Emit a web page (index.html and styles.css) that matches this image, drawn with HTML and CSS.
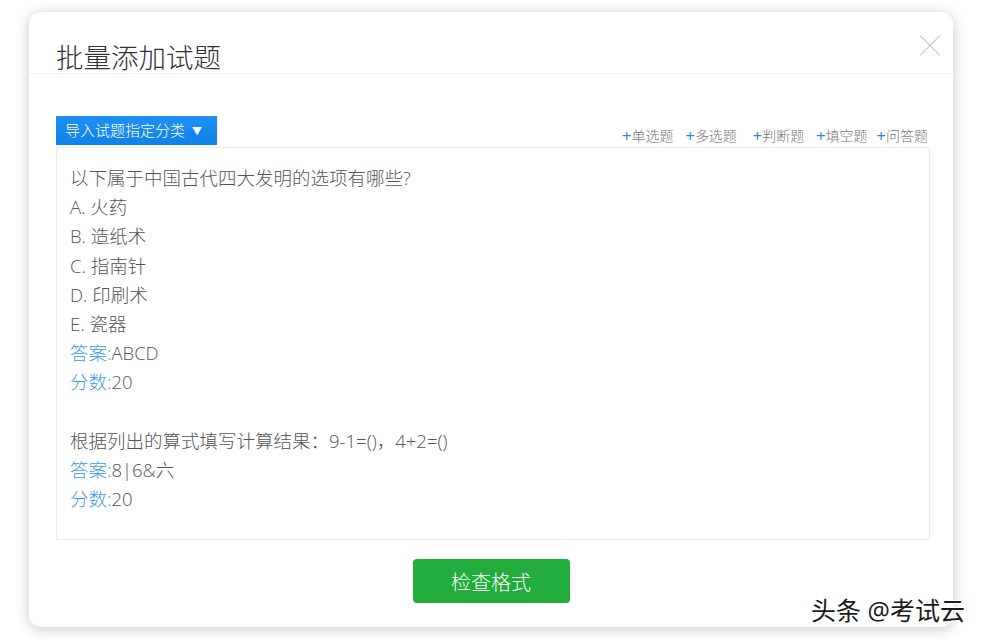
FILE: index.html
```html
<html>
<head>
<title>批量添加试题</title>
<meta charset="utf-8">
<link rel="stylesheet" href="styles.css">
</head>
<body>
	<div class="modal">
		<div class="modal_head">
			<h2>批量添加试题</h2>
			<span class="close"></span>
		</div>
		<div class="modal_body">
			<div class="toolbar">
				<div class="category">导入试题指定分类 <span class="caret">&#9660;</span></div>
				<div class="types">
					<a><b>+</b>单选题</a>
					<a><b>+</b>多选题</a>
					<a class="wide"><b>+</b>判断题</a>
					<a><b>+</b>填空题</a>
					<a class="tight"><b>+</b>问答题</a>
				</div>
			</div>
			<div class="editor">
				<p>以下属于中国古代四大发明的选项有哪些?</p>
				<p>A. 火药</p>
				<p>B. 造纸术</p>
				<p>C. 指南针</p>
				<p>D. 印刷术</p>
				<p>E. 瓷器</p>
				<p><span class="key">答案:</span>ABCD</p>
				<p><span class="key">分数:</span>20</p>
				<p>&nbsp;</p>
				<p>根据列出的算式填写计算结果：9-1=()，4+2=()</p>
				<p><span class="key">答案:</span>8|6&amp;六</p>
				<p><span class="key">分数:</span>20</p>
			</div>
			<div class="actions">
				<button class="check">检查格式</button>
			</div>
		</div>
	</div>
	<div class="watermark">头条 @考试云</div>
</body>
</html>
```

FILE: styles.css
```css
body{
	margin:0;padding:0;
	background-color:#fff;
	font-family:"Open Sans","Noto Sans CJK SC",sans-serif;
	font-weight:300;
}

	div.modal{
		margin:12px 0 0 29px;
		width:924px;
		height:615px;
		background-color:#fff;
		border-radius:12px;
		box-shadow:0 2px 14px rgba(0,0,0,0.22);
		box-sizing:border-box;
	}

	div.modal_head{
		position:relative;
		height:62px;
		border-bottom:1px solid #f2f2f2;
		box-sizing:border-box;
		padding:32px 0 0 27px;
	}

	div.modal_head h2{
		margin:0;
		font-weight:300;
		font-size:27.5px;
		line-height:28px;
		color:#333;
	}

	span.close{
		position:absolute;
		right:13px;
		top:24px;
		width:20px;
		height:20px;
	}

	span.close:before, span.close:after{
		content:"";
		position:absolute;
		left:-4px;
		top:9px;
		width:28px;
		height:1px;
		background-color:#c4c4c4;
		transform:rotate(45deg);
	}

	span.close:after{
		transform:rotate(-45deg);
	}

	div.modal_body{
		padding:42px 23px 0 27px;
	}

	div.toolbar{
		display:flex;
		justify-content:space-between;
		align-items:flex-end;
		height:31px;
	}

	div.category{
		width:161px;
		height:29px;
		line-height:29px;
		box-sizing:border-box;
		padding-left:9px;
		background:linear-gradient(#1f90f2,#0f82e8);
		color:#fff;
		font-size:15px;
		align-self:flex-start;
	}

	span.caret{
		font-size:10px;
		margin-left:3px;
		position:relative;
		top:-1px;
	}

	div.types{
		font-size:14px;
		color:#777;
		line-height:20px;
		padding-bottom:1px;
		margin-right:2px;
	}

	div.types a{
		margin-left:8px;
	}

	div.types a.wide{
		margin-left:12px;
	}

	div.types a.tight{
		margin-left:5px;
	}

	div.types b{
		font-weight:400;
		color:#1f88e5;
		font-size:17px;
		position:relative;
		top:1px;
	}

	div.editor{
		height:393px;
		box-sizing:border-box;
		border:1px solid #ececec;
		padding:15px 13px;
		font-size:18.5px;
		color:#555;
	}

	div.editor p{
		margin:0;
		line-height:29.2px;
	}

	span.key{
		color:#3c9ae6;
	}

	div.actions{
		display:flex;
		justify-content:center;
		padding-top:19px;
		margin-left:-4px;
	}

	button.check{
		width:157px;
		height:44px;
		border:none;
		border-radius:4px;
		background-color:#21ac3b;
		color:#fff;
		font-family:"Open Sans","Noto Sans CJK SC",sans-serif;
		font-weight:300;
		font-size:20px;
	}

	div.watermark{
		position:absolute;
		left:811px;
		top:591px;
		font-size:25px;
		font-weight:normal;
		color:#1a1a1a;
		text-shadow:1px 1px 0 #fff,-1px -1px 0 #fff,1px -1px 0 #fff,-1px 1px 0 #fff;
	}
```
